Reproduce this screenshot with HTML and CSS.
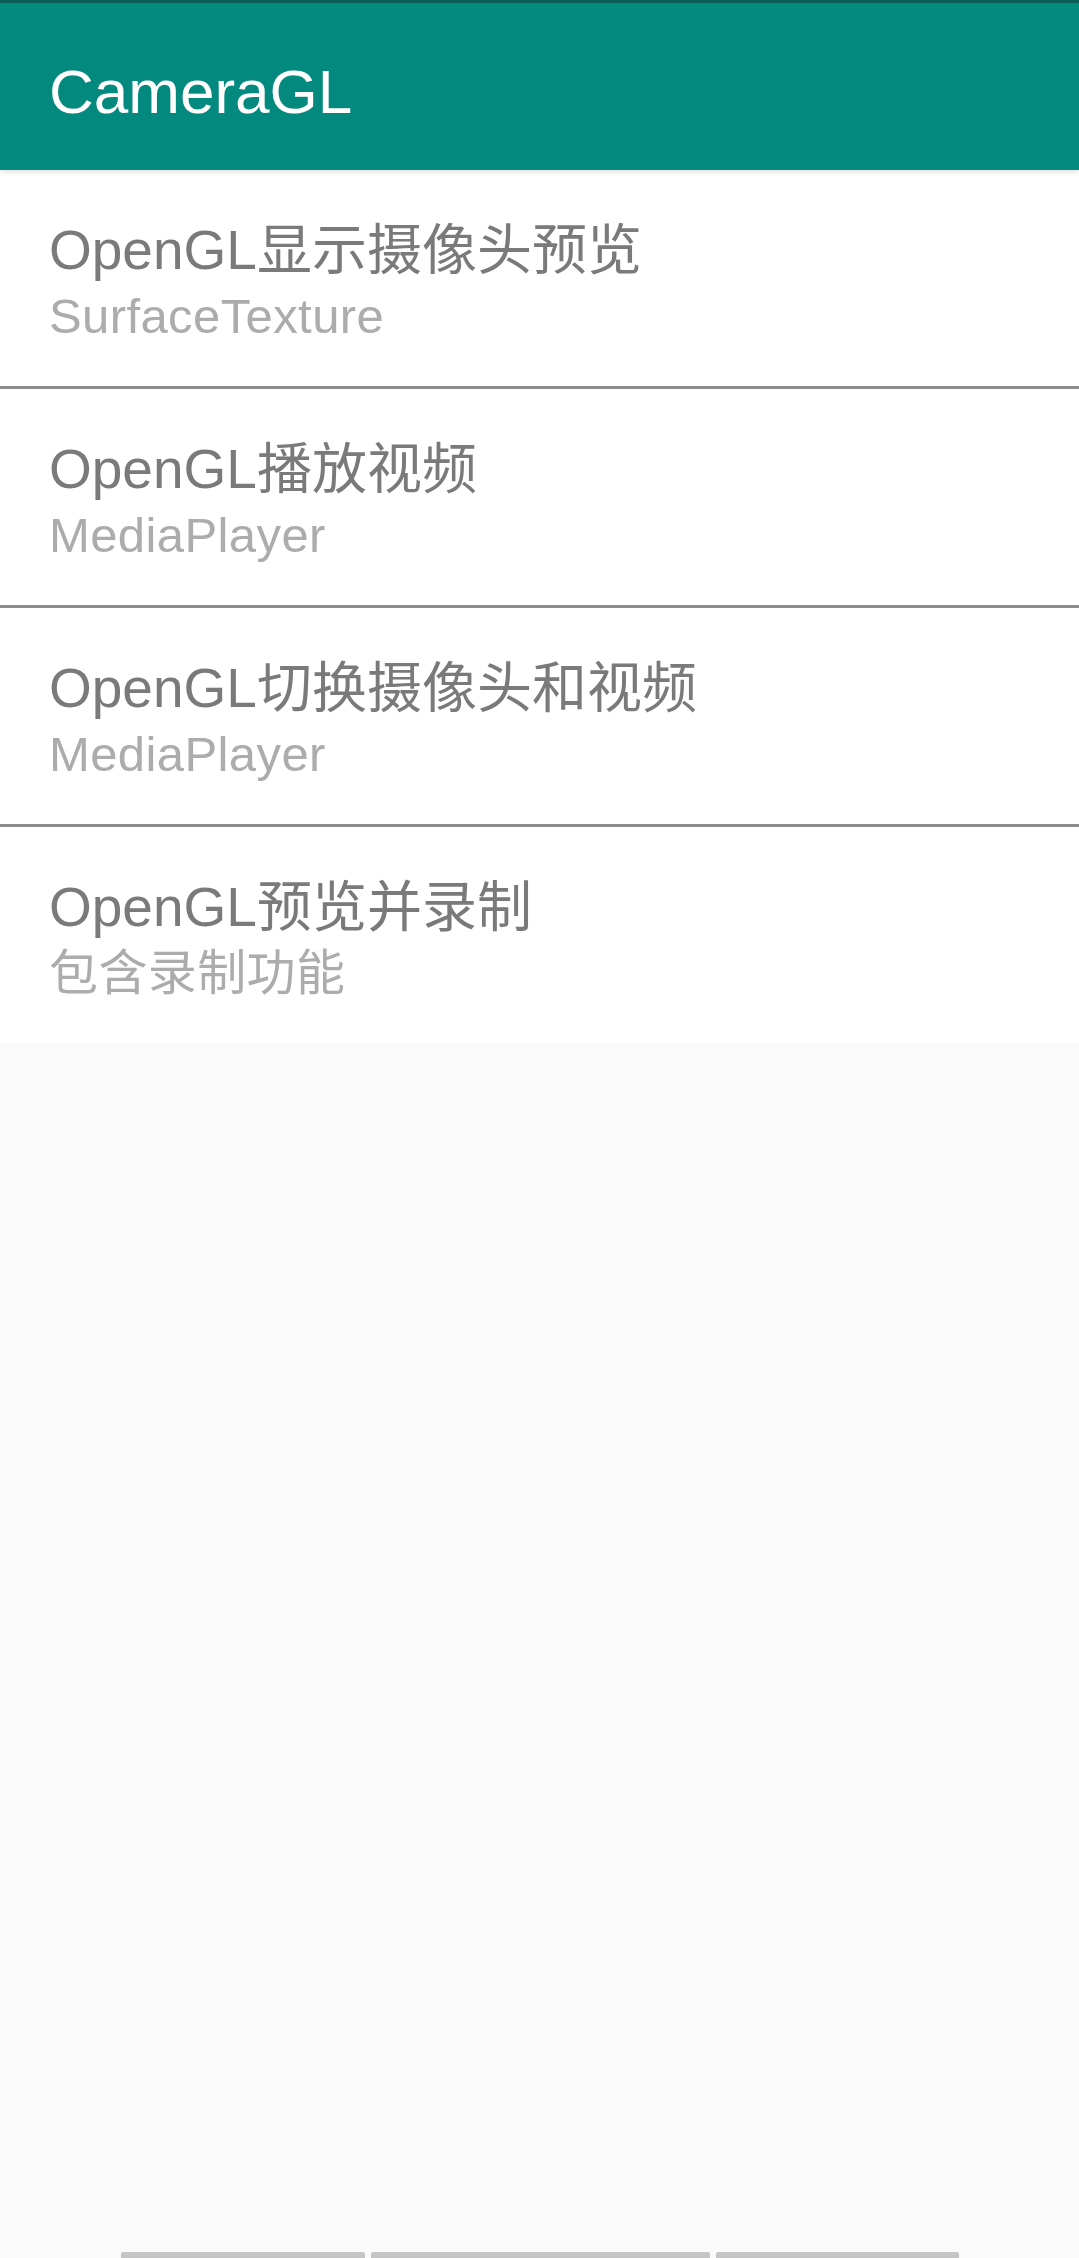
FILE: index.html
```html
<!DOCTYPE html>
<html lang="zh-CN">
<head>
<meta charset="utf-8">
<title>CameraGL</title>
<link rel="stylesheet" href="styles.css">
</head>
<body>
<div class="screen">
  <div class="statusbar"></div>
  <header class="toolbar">
    <h1 class="toolbar-title">CameraGL</h1>
  </header>
  <ul class="list">
    <li class="item">
      <div class="item-title">OpenGL显示摄像头预览</div>
      <div class="item-sub">SurfaceTexture</div>
    </li>
    <li class="divider"></li>
    <li class="item">
      <div class="item-title">OpenGL播放视频</div>
      <div class="item-sub">MediaPlayer</div>
    </li>
    <li class="divider"></li>
    <li class="item">
      <div class="item-title">OpenGL切换摄像头和视频</div>
      <div class="item-sub">MediaPlayer</div>
    </li>
    <li class="divider"></li>
    <li class="item">
      <div class="item-title">OpenGL预览并录制</div>
      <div class="item-sub">包含录制功能</div>
    </li>
  </ul>
  <div class="spacer"></div>
  <div class="bottom-bars">
    <span class="bar bar-a"></span>
    <span class="bar bar-b"></span>
    <span class="bar bar-c"></span>
  </div>
</div>
</body>
</html>
```

FILE: styles.css
```css
html, body {
  margin: 0;
  padding: 0;
  background: #fafafa;
}

.screen {
  width: 1079px;
  height: 2258px;
  display: flex;
  flex-direction: column;
  background: #fafafa;
  font-family: "Liberation Sans", "Noto Sans CJK SC", sans-serif;
  overflow: hidden;
}

.statusbar {
  height: 3px;
  background: #0b5f58;
  flex: none;
}

.toolbar {
  height: 167px;
  flex: none;
  background: #04897f;
  display: flex;
  align-items: center;
  padding: 10px 0 0 49px;
  box-sizing: border-box;
  box-shadow: 0 2px 5px rgba(0, 0, 0, 0.12);
  position: relative;
  z-index: 1;
}

.toolbar-title {
  margin: 0;
  font-weight: normal;
  font-size: 62px;
  line-height: 1;
  color: #ffffff;
}

.list {
  list-style: none;
  margin: 0;
  padding: 0;
  background: #ffffff;
  flex: none;
}

.item {
  height: 216px;
  box-sizing: border-box;
  padding: 47px 0 0 49px;
}

.item-title {
  font-size: 55px;
  line-height: 66px;
  color: #7a7a7a;
  white-space: nowrap;
}

.item-sub {
  font-size: 49px;
  line-height: 66px;
  color: #acacac;
  letter-spacing: 0.4px;
  white-space: nowrap;
}

.divider {
  height: 3px;
  background: #8b8b8b;
}

.spacer {
  flex: 1;
}

.bottom-bars {
  flex: none;
  height: 6px;
  display: flex;
  gap: 6px;
  padding-left: 121px;
}

.bar {
  display: block;
  height: 6px;
  background: #c5c5c5;
  border-radius: 2px 2px 0 0;
}

.bar-a { width: 244px; }
.bar-b { width: 339px; }
.bar-c { width: 243px; }
```
